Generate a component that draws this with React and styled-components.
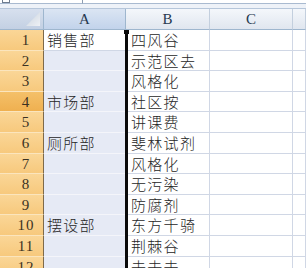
import React from 'react';
import styled, { createGlobalStyle, css } from 'styled-components';

const Global = createGlobalStyle`
  html, body { margin: 0; padding: 0; background: #fff; }
  body { width: 306px; height: 268px; overflow: hidden; }
`;

const Sheet = styled.div`
  width: 306px;
  height: 268px;
  overflow: hidden;
  background: #fff;
  display: flex;
  flex-direction: column;
  font-family: "Noto Sans CJK SC", sans-serif;
`;

const FormulaStrip = styled.div`
  flex: none;
  height: 8px;
  display: flex;
  background: #eef2f8;
  border-bottom: 1px solid #b6c6da;
`;

const NameBox = styled.div`
  width: 82px;
  flex: none;
  background: #fff;
  border-right: 1px solid #8d9db2;
  border-bottom: 1px solid #a9bad0;
  height: 3px;
`;

const NameIcon = styled.div`
  margin-left: 2px;
  width: 6px;
  height: 2px;
  border: 1px solid #6f7d8f;
  border-top: none;
`;

const FormulaInput = styled.div`
  flex: 1;
  height: 3px;
  background: #fff;
  border-bottom: 1px solid #a9bad0;
`;

const Grid = styled.div`
  display: grid;
  grid-template-columns: 44px 82px 84px 83px 1fr;
  grid-template-rows: 21px;
  grid-auto-rows: 20.6px;
`;

const Corner = styled.div`
  position: relative;
  background: linear-gradient(#d7e0ee, #c3d0e3);
  border-right: 1px solid #9eb6ce;
  border-bottom: 1px solid #9eb6ce;
  &::after {
    content: '';
    position: absolute;
    right: 3px;
    bottom: 3px;
    width: 14px;
    height: 14px;
    background: linear-gradient(135deg, #c9d2de, #eef1f5);
    clip-path: polygon(100% 0, 100% 100%, 0 100%);
  }
`;

const ColHeader = styled.div`
  background: ${(p) =>
    p.$active
      ? 'linear-gradient(#dbe5f3, #c2d3eb)'
      : 'linear-gradient(#f4f7fb, #e0e6ef)'};
  border-right: 1px solid ${(p) => (p.$active ? '#9eb6ce' : '#c3cfde')};
  border-bottom: 1px solid #9eb6ce;
  font-family: "Liberation Serif", serif;
  font-size: 15px;
  line-height: 20px;
  color: #27384f;
  text-align: center;
`;

const RowHeader = styled.div`
  background: ${(p) =>
    p.$active
      ? 'linear-gradient(#f4c069, #efb050)'
      : 'linear-gradient(#fad697, #f7c97d)'};
  border-right: 1px solid #7e6a4a;
  border-bottom: 1px solid #fbe5bd;
  font-family: "Liberation Serif", serif;
  font-size: 15px;
  letter-spacing: 1px;
  line-height: 20px;
  color: #3b3223;
  padding-left: 9px;
  text-align: center;
  overflow: hidden;
`;

const Cell = styled.div`
  position: relative;
  background: #fff;
  border-right: 1px solid #d0d7e5;
  border-bottom: 1px solid #d0d7e5;
  padding-left: ${(p) => (p.$colA ? '3px' : '5px')};
  font-size: 15px;
  font-weight: 300;
  letter-spacing: 1.3px;
  line-height: 20px;
  color: #262626;
  white-space: nowrap;
  overflow: visible;
  ${(p) =>
    p.$shaded &&
    css`
      background: #e6eaf5;
      border-bottom-color: #f4f5fa;
    `}
  ${(p) =>
    p.$colA &&
    css`
      &::after {
        content: '';
        position: absolute;
        top: 0;
        bottom: -1px;
        left: 81px;
        width: 3px;
        background: #0a0a0a;
        z-index: 2;
      }
    `}
  ${(p) =>
    p.$nub &&
    css`
      &::before {
        content: '';
        position: absolute;
        top: 0;
        left: 80px;
        width: 5px;
        height: 4px;
        background: #0a0a0a;
        z-index: 3;
      }
    `}
`;

const colA = { 1: '销售部', 4: '市场部', 6: '厕所部', 10: '摆设部' };
const colB = [
  '四风谷', '示范区去', '风格化', '社区按', '讲课费', '斐林试剂',
  '风格化', '无污染', '防腐剂', '东方千骑', '荆棘谷', '去去去',
];

export default function App() {
  const rows = Array.from({ length: 12 }, (_, i) => i + 1);
  return (
    <Sheet>
      <Global />
      <FormulaStrip>
        <NameBox>
          <NameIcon />
        </NameBox>
        <FormulaInput />
      </FormulaStrip>
      <Grid>
        <Corner />
        <ColHeader $active>A</ColHeader>
        <ColHeader>B</ColHeader>
        <ColHeader>C</ColHeader>
        <ColHeader />
        {rows.map((r) => (
          <React.Fragment key={r}>
            <RowHeader $active={r === 4}>{r}</RowHeader>
            <Cell $colA $shaded={r !== 1} $nub={r === 1}>
              {colA[r] || ''}
            </Cell>
            <Cell>{colB[r - 1]}</Cell>
            <Cell />
            <Cell />
          </React.Fragment>
        ))}
      </Grid>
    </Sheet>
  );
}
